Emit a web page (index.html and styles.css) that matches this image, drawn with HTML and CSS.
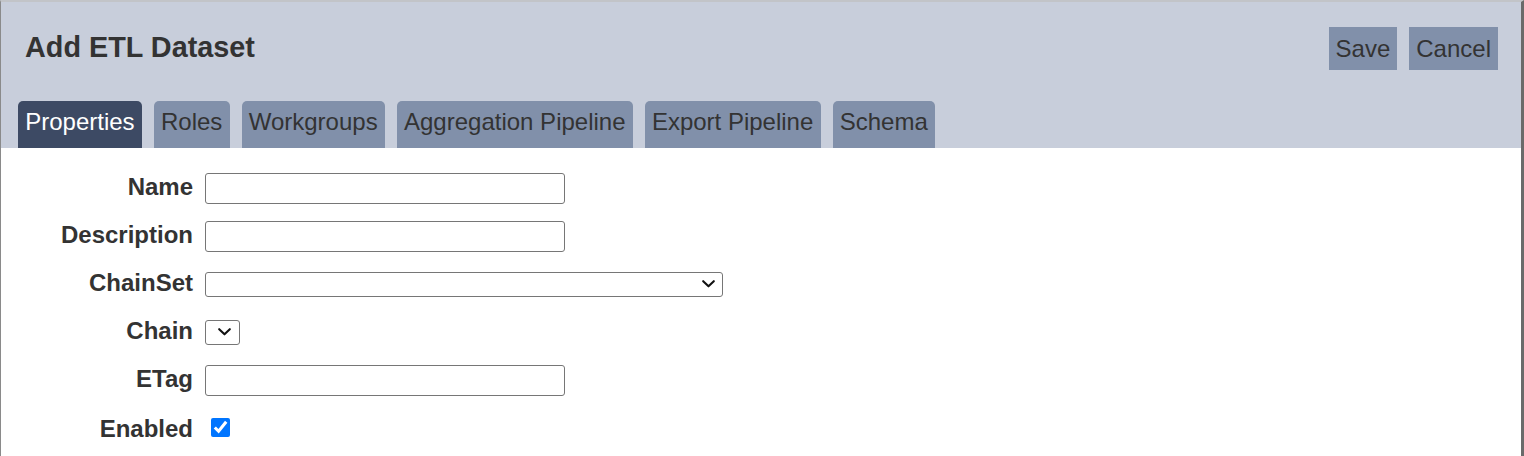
FILE: index.html
```html
<!DOCTYPE html>
<html lang="en">
<head>
<meta charset="utf-8">
<title>Add ETL Dataset</title>
<link rel="stylesheet" href="styles.css">
</head>
<body>
<div class="dialog">
  <div class="header">
    <div class="header-top">
      <h1 class="title">Add ETL Dataset</h1>
      <div class="actions">
        <button class="btn" type="button">Save</button>
        <button class="btn" type="button">Cancel</button>
      </div>
    </div>
    <div class="tabs">
      <div class="tab active">Properties</div>
      <div class="tab">Roles</div>
      <div class="tab">Workgroups</div>
      <div class="tab">Aggregation Pipeline</div>
      <div class="tab">Export Pipeline</div>
      <div class="tab">Schema</div>
    </div>
  </div>
  <form class="form">
    <label class="label" for="f-name">Name</label>
    <input class="text" id="f-name" type="text">
    <label class="label" for="f-desc">Description</label>
    <input class="text" id="f-desc" type="text">
    <label class="label" for="f-chainset">ChainSet</label>
    <select class="sel wide" id="f-chainset"><option></option></select>
    <label class="label" for="f-chain">Chain</label>
    <select class="sel narrow" id="f-chain"><option></option></select>
    <label class="label" for="f-etag">ETag</label>
    <input class="text" id="f-etag" type="text">
    <label class="label last" for="f-enabled">Enabled</label>
    <input class="check" id="f-enabled" type="checkbox" checked>
  </form>
</div>
</body>
</html>
```

FILE: styles.css
```css
html, body {
  margin: 0;
  padding: 0;
  background: #ffffff;
}

body {
  font-family: "Liberation Sans", Arial, sans-serif;
  color: #333333;
}

.dialog {
  box-sizing: border-box;
  width: 1524px;
  height: 456px;
  border-top: 2px solid #c2c4c8;
  border-left: 1px solid #8a8a8a;
  border-right: 3px solid #6a6a6a;
  overflow: hidden;
}

.header {
  background: #c8cedb;
}

.header-top {
  display: flex;
  justify-content: space-between;
  align-items: flex-start;
  padding: 25px 23px 0 24px;
}

.title {
  margin: 4px 0 0 0;
  font-size: 28.8px;
  line-height: 33px;
  font-weight: bold;
  color: #333333;
}

.actions {
  display: flex;
  gap: 12px;
}

.btn {
  height: 43px;
  padding: 0 7px;
  border: none;
  border-radius: 0;
  background: #8190aa;
  color: #333333;
  font-family: "Liberation Sans", Arial, sans-serif;
  font-size: 24px;
  line-height: 43px;
}

.tabs {
  display: flex;
  gap: 12px;
  padding: 0 0 0 17px;
  margin-top: 31px;
}

.tab {
  height: 47px;
  box-sizing: border-box;
  padding: 7px 7.2px 13px 7.2px;
  font-size: 24px;
  line-height: 27px;
  background: #8190aa;
  color: #333333;
  border-radius: 5px 5px 0 0;
  white-space: nowrap;
}

.tab.active {
  background: #3d4a64;
  color: #ffffff;
}

.form {
  display: grid;
  grid-template-columns: 192px auto;
  grid-auto-rows: 48px;
  column-gap: 12px;
  align-items: center;
  justify-items: start;
  padding-top: 16px;
  margin: 0;
}

.label {
  justify-self: end;
  font-size: 24px;
  font-weight: bold;
  color: #333333;
  position: relative;
  top: -1px;
}

.label.last {
  top: 1px;
}

.text {
  box-sizing: border-box;
  width: 360px;
  height: 31px;
  margin: 0;
  border: 1px solid #767676;
  border-radius: 3px;
  background: #ffffff;
  font-family: "Liberation Sans", Arial, sans-serif;
  font-size: 20px;
}

.sel {
  box-sizing: border-box;
  height: 25px;
  margin: 0;
  border: 1px solid #767676;
  border-radius: 3px;
  -webkit-appearance: none;
  appearance: none;
  background-color: #ffffff;
  background-image: url("data:image/svg+xml,%3Csvg xmlns='http://www.w3.org/2000/svg' width='13' height='8' viewBox='0 0 13 8'%3E%3Cpath d='M1.2 1.2 L6.5 6.3 L11.8 1.2' fill='none' stroke='%23111' stroke-width='2.1' stroke-linecap='round' stroke-linejoin='round'/%3E%3C/svg%3E");
  background-repeat: no-repeat;
  background-size: 13px 8px;
  background-position: right 7px center;
  font-family: "Liberation Sans", Arial, sans-serif;
  font-size: 16px;
  color: #000000;
}

.sel.wide {
  width: 518px;
}

.sel.narrow {
  width: 35px;
  background-position: right 8px center;
}

.check {
  width: 19px;
  height: 19px;
  margin: -2px 0 0 6px;
}
```
